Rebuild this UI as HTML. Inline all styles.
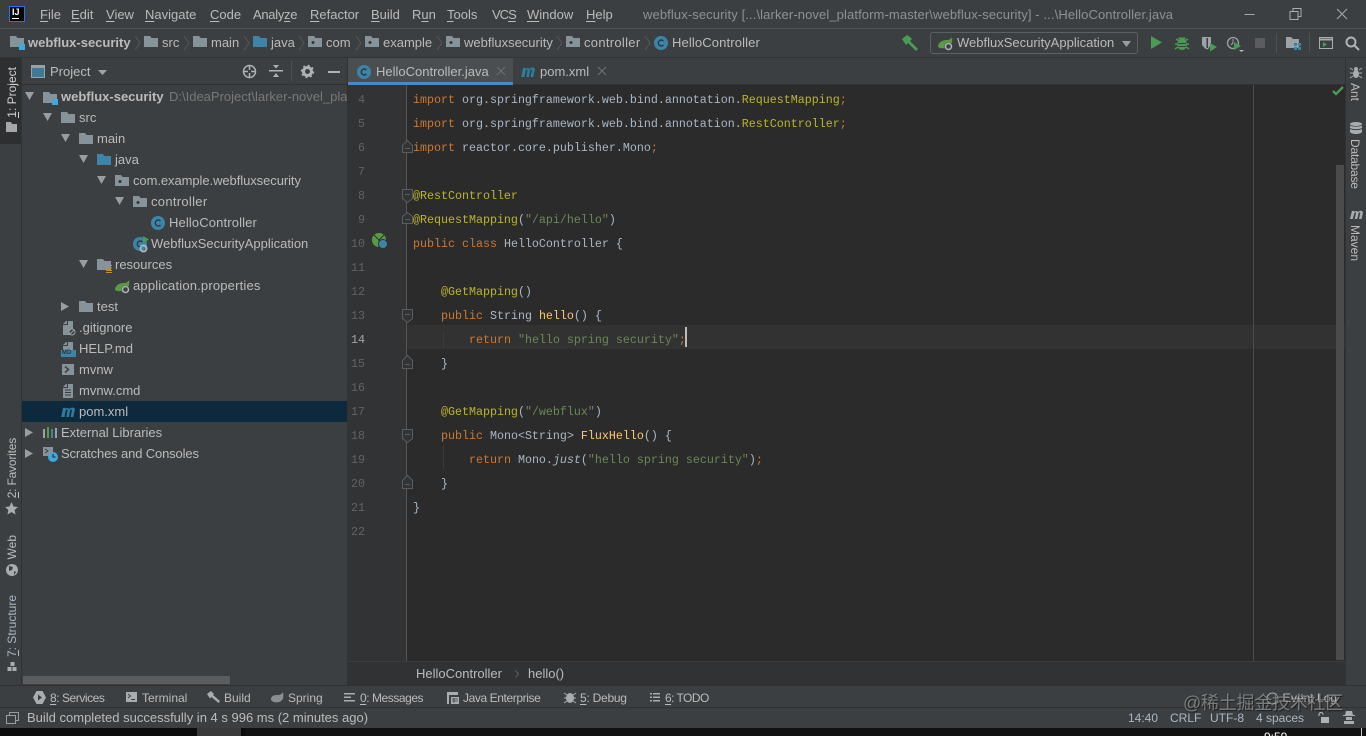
<!DOCTYPE html>
<html><head><meta charset="utf-8"><title>HelloController.java</title>
<style>
html,body{margin:0;padding:0;width:1366px;height:736px;overflow:hidden;background:#3c3f41}
*{box-sizing:border-box}
.b{position:absolute}
.t{position:absolute;white-space:pre;font:13px/18px "Liberation Sans","Noto Sans CJK SC",sans-serif;color:#bbb}
.c{position:absolute;white-space:pre;font:11.67px/18px "Liberation Mono",monospace;color:#a9b7c6;left:413px;letter-spacing:0}
.n{position:absolute;white-space:pre;font:11.67px/18px "Liberation Mono",monospace;color:#606366;text-align:right;left:348px;width:17px}
.k{color:#cc7832}.a{color:#bbb529}.s{color:#6a8759}.f{color:#ffc66d}.y{color:#cc7832}.p{color:#a9b7c6}
.i{position:absolute;overflow:visible}
.v{position:absolute;white-space:pre;font:12px/16px "Liberation Sans",sans-serif;color:#bbb;writing-mode:vertical-rl}
.vl{transform:rotate(180deg)}
u{text-decoration:underline;text-underline-offset:2px}
</style></head><body>
<svg width="0" height="0" style="position:absolute"><defs>
<symbol id="fo" viewBox="0 0 14 12"><path d="M0 1h6l1.500 2H14v9H0z" fill="#87939a"/></symbol>
<symbol id="fb" viewBox="0 0 14 12"><path d="M0 1h6l1.500 2H14v9H0z" fill="#3d84a8"/></symbol>
<symbol id="fp" viewBox="0 0 14 12"><path d="M0 1h6l1.500 2H14v9H0z" fill="#87939a"/><circle cx="5" cy="7.500" r="1.500" fill="#33363a"/></symbol>
<symbol id="dn" viewBox="0 0 9 8"><path d="M0 0h9L4.500 8z" fill="#9a9da0"/></symbol>
<symbol id="rt" viewBox="0 0 8 9"><path d="M0 0l8 4.500L0 9z" fill="#9a9da0"/></symbol>
<symbol id="cl" viewBox="0 0 14 14"><circle cx="7" cy="7" r="7" fill="#3d84a8"/><path d="M9.500 5A3 3 0 1 0 9.500 9" fill="none" stroke="#2b3a42" stroke-width="1.400"/></symbol>
<symbol id="mv" viewBox="0 0 16 11"><path d="M0 11L2 1h3l-.3 1.200C6 .8 8 .5 9 2.200 10.500.6 14-.5 15 2.500L13.300 11h-3l1.500-7.500c.1-1-1.300-1-2 .2L8.500 11h-3L7 3.500c.1-1-1.300-1-2 .2L3.500 11z" fill="#2f7d9e"/></symbol>
<symbol id="lf" viewBox="0 0 16 14"><path d="M0 10C0 5 5 3 9 3c2 0 4-1 5-3 1 5-1 10-6 11-3 .5-6 .5-8-1z" fill="#5a9a42"/><circle cx="10.500" cy="9.500" r="4" fill="#3c3f41"/><circle cx="10.500" cy="9.500" r="3" fill="none" stroke="#aeb5ba" stroke-width="1.500"/></symbol>
</defs></svg>

<!-- title bar -->
<div class="b" style="left:0;top:28px;width:1366px;height:1px;background:#505254"></div>
<div class="b" style="left:9px;top:6px;width:16px;height:16px;background:#000;border:1px solid #1e78e6"></div>
<div class="t" style="left:12px;top:7px;font:bold 9px/10px 'Liberation Sans',sans-serif;color:#fff">IJ</div>
<div class="b" style="left:12px;top:18px;width:7px;height:1px;background:#fff"></div>
<div class="t" style="left:40px;top:6px"><u>F</u>ile</div>
<div class="t" style="left:71px;top:6px"><u>E</u>dit</div>
<div class="t" style="left:106px;top:6px"><u>V</u>iew</div>
<div class="t" style="left:145px;top:6px"><u>N</u>avigate</div>
<div class="t" style="left:210px;top:6px"><u>C</u>ode</div>
<div class="t" style="left:253px;top:6px;letter-spacing:-.3px">Analy<u>z</u>e</div>
<div class="t" style="left:310px;top:6px"><u>R</u>efactor</div>
<div class="t" style="left:371px;top:6px"><u>B</u>uild</div>
<div class="t" style="left:412px;top:6px">R<u>u</u>n</div>
<div class="t" style="left:447px;top:6px"><u>T</u>ools</div>
<div class="t" style="left:492px;top:6px;letter-spacing:-1px">VC<u>S</u></div>
<div class="t" style="left:527px;top:6px"><u>W</u>indow</div>
<div class="t" style="left:586px;top:6px"><u>H</u>elp</div>
<div class="t" style="left:643px;top:6px;color:#8e9193;letter-spacing:.105px">webflux-security [...\larker-novel_platform-master\webflux-security] - ...\HelloController.java</div>
<svg class="i" style="left:1240px;top:6px" width="126" height="18" fill="none" stroke="#a9abad"><path d="M4.500 8.500h10M50 5.500h8v8h-8zM53 5.500v-3h8v8h-3M97 3l10 10M107 3L97 13"/></svg>

<!-- nav bar -->
<div class="b" style="left:0;top:57px;width:1366px;height:1px;background:#313335"></div>
<svg class="i" style="left:10px;top:35px" width="14" height="12"><use href="#fo"/></svg>
<div class="b" style="left:19px;top:44px;width:6px;height:6px;background:#3fa8dc"></div>
<div class="t" style="left:28px;top:34px;font-weight:bold">webflux-security</div>
<svg class="i" style="left:134px;top:35px" width="8" height="16" fill="none" stroke="#55585a"><path d="M1 1l5 7-5 7"/></svg>
<svg class="i" style="left:144px;top:35px" width="14" height="12"><use href="#fo"/></svg>
<div class="t" style="left:162px;top:34px">src</div>
<svg class="i" style="left:183px;top:35px" width="8" height="16" fill="none" stroke="#55585a"><path d="M1 1l5 7-5 7"/></svg>
<svg class="i" style="left:193px;top:35px" width="14" height="12"><use href="#fo"/></svg>
<div class="t" style="left:211px;top:34px">main</div>
<svg class="i" style="left:243px;top:35px" width="8" height="16" fill="none" stroke="#55585a"><path d="M1 1l5 7-5 7"/></svg>
<svg class="i" style="left:253px;top:35px" width="14" height="12"><use href="#fb"/></svg>
<div class="t" style="left:271px;top:34px">java</div>
<svg class="i" style="left:298px;top:35px" width="8" height="16" fill="none" stroke="#55585a"><path d="M1 1l5 7-5 7"/></svg>
<svg class="i" style="left:308px;top:35px" width="14" height="12"><use href="#fp"/></svg>
<div class="t" style="left:326px;top:34px">com</div>
<svg class="i" style="left:355px;top:35px" width="8" height="16" fill="none" stroke="#55585a"><path d="M1 1l5 7-5 7"/></svg>
<svg class="i" style="left:365px;top:35px" width="14" height="12"><use href="#fp"/></svg>
<div class="t" style="left:383px;top:34px">example</div>
<svg class="i" style="left:436px;top:35px" width="8" height="16" fill="none" stroke="#55585a"><path d="M1 1l5 7-5 7"/></svg>
<svg class="i" style="left:446px;top:35px" width="14" height="12"><use href="#fp"/></svg>
<div class="t" style="left:464px;top:34px">webfluxsecurity</div>
<svg class="i" style="left:556px;top:35px" width="8" height="16" fill="none" stroke="#55585a"><path d="M1 1l5 7-5 7"/></svg>
<svg class="i" style="left:566px;top:35px" width="14" height="12"><use href="#fp"/></svg>
<div class="t" style="left:584px;top:34px;letter-spacing:.3px">controller</div>
<svg class="i" style="left:644px;top:35px" width="8" height="16" fill="none" stroke="#55585a"><path d="M1 1l5 7-5 7"/></svg>
<svg class="i" style="left:654px;top:36px" width="14" height="14"><use href="#cl"/></svg>
<div class="t" style="left:672px;top:34px;letter-spacing:.13px">HelloController</div>

<!-- toolbar right -->
<svg class="i" style="left:902px;top:35px" width="17" height="16"><path d="M0 4l5-4 3 2 2 2-2 2 8 8-2 2-8-8-2 2z" fill="#499c54"/></svg>
<div class="b" style="left:930px;top:32px;width:208px;height:22px;border:1px solid #5e6060;border-radius:3px"></div>
<svg class="i" style="left:938px;top:37px" width="16" height="14"><use href="#lf"/></svg>
<div class="t" style="left:957px;top:34px">WebfluxSecurityApplication</div>
<svg class="i" style="left:1122px;top:41px" width="9" height="6"><path d="M0 0h9L4.500 6z" fill="#9a9da0"/></svg>
<svg class="i" style="left:1151px;top:36px" width="11" height="13"><path d="M0 0l11 6.500L0 13z" fill="#499c54"/></svg>
<svg class="i" style="left:1175px;top:36px" width="14" height="14"><path d="M3.500 1.500h7v2h-7z" fill="#499c54"/><ellipse cx="7" cy="8.500" rx="4.800" ry="5.500" fill="#499c54"/><path d="M1 3l3 2M13 3l-3 2M0 8h3M11 8h3M0 13l3-2M14 13l-3-2" stroke="#499c54" stroke-width="1.500"/><path d="M3 7.500h8M3 10.500h8" stroke="#3c3f41"/></svg>
<svg class="i" style="left:1202px;top:37px" width="15" height="15"><path d="M0 0h9v7l-3 5.500-3-1L0 8z" fill="#9ba2a8"/><path d="M4.500 1H6v10H4.500z" fill="#3c3f41"/><path d="M8 6l7 4-7 4.500z" fill="#499c54"/></svg>
<svg class="i" style="left:1226px;top:36px" width="18" height="16"><circle cx="7" cy="7" r="5.500" fill="none" stroke="#9ba2a8" stroke-width="1.300"/><path d="M7 3v4l-2 2" fill="none" stroke="#9ba2a8"/><path d="M8 6l7 4-7 4z" fill="#499c54"/><path d="M13 14h5l-2.500 2z" fill="#bbb"/></svg>
<div class="b" style="left:1255px;top:38px;width:10px;height:10px;background:#5a5c5e"></div>
<div class="b" style="left:1276px;top:33px;width:1px;height:20px;background:#4d4f51"></div>
<svg class="i" style="left:1286px;top:37px" width="15" height="13"><path d="M0 0h5l2 2h6v9H0z" fill="#9ba2a8"/><path d="M8 6h3v3H8zM12 6h3v3h-3zM8 10h3v3H8zM12 10h3v3h-3z" fill="#3d84a8"/></svg>
<div class="b" style="left:1309px;top:33px;width:1px;height:20px;background:#4d4f51"></div>
<svg class="i" style="left:1319px;top:37px" width="14" height="12" fill="none"><path d="M.5.500h13v11H.500z" stroke="#a9abad"/><path d="M.5 2.500h13" stroke="#a9abad" stroke-width="2"/><path d="M4 5l4 2.500L4 10z" fill="#499c54"/></svg>
<svg class="i" style="left:1345px;top:36px" width="15" height="15" fill="none" stroke="#b0b3b6" stroke-width="2"><circle cx="6" cy="6" r="4.500"/><path d="M9.500 9.500L14 14"/></svg>

<!-- left stripe -->
<div class="b" style="left:0;top:58px;width:21px;height:86px;background:#2d2f30"></div>
<div class="b" style="left:21px;top:58px;width:1px;height:628px;background:#323232"></div>
<div class="v vl" style="left:4px;top:67px;color:#d0d0d0">1: Project</div>
<div class="b" style="left:18px;top:112px;width:1px;height:6px;background:#d0d0d0"></div>
<svg class="i" style="left:6px;top:122px" width="11" height="10"><path d="M0 0h5l1 2h5v8H0z" fill="#a4a8ab"/></svg>
<div class="v vl" style="left:4px;top:438px;letter-spacing:-.2px">2: Favorites</div>
<div class="b" style="left:18px;top:492px;width:1px;height:6px;background:#bbb"></div>
<svg class="i" style="left:5px;top:502px" width="13" height="13"><path d="M6.500 0l2 4.500 4.500.5-3.400 3 1 4.500-4.100-2.400-4.100 2.400 1-4.500L0 5l4.500-.5z" fill="#a9adb0"/></svg>
<div class="v vl" style="left:4px;top:535px">Web</div>
<svg class="i" style="left:6px;top:564px" width="12" height="12"><circle cx="6" cy="6" r="6" fill="#a9adb0"/><path d="M3 2l4 1-1 3-3 1zM8 7l2 1-2 3z" fill="#3c3f41"/></svg>
<div class="v vl" style="left:4px;top:595px;color:#a9b7c6">7: Structure</div>
<div class="b" style="left:18px;top:650px;width:1px;height:6px;background:#a9b7c6"></div>
<svg class="i" style="left:7px;top:662px" width="10" height="10"><path d="M3 0h4v4H3zM0 5h4v4H0zM5 5h4v4H5z" fill="#a9adb0" transform="translate(.5)"/></svg>

<!-- project panel -->
<div class="b" style="left:22px;top:84px;width:326px;height:1px;background:#323232"></div>
<div class="b" style="left:347px;top:58px;width:1px;height:628px;background:#323232"></div>
<svg class="i" style="left:31px;top:65px" width="14" height="13"><rect x=".5" y=".5" width="13" height="12" fill="#3c7a98" stroke="#9aa0a4"/><rect x="1" y="1" width="12" height="2" fill="#9aa0a4"/></svg>
<div class="t" style="left:50px;top:63px">Project</div>
<svg class="i" style="left:98px;top:70px" width="9" height="5"><path d="M0 0h9L4.500 5z" fill="#a0a3a6"/></svg>
<svg class="i" style="left:242px;top:64px" width="15" height="15" fill="none" stroke="#afb1b3" stroke-width="1.500"><circle cx="7.500" cy="7.500" r="6"/><path d="M7.500 1v5M7.500 9v5M1 7.500h5M9 7.500h5"/></svg>
<svg class="i" style="left:269px;top:64px" width="14" height="14" fill="#afb1b3"><path d="M0 6h14v1.500H0zM4 1h6L7 4.500zM4 13h6L7 9z"/></svg>
<div class="b" style="left:291px;top:61px;width:1px;height:20px;background:#4d4f51"></div>
<svg class="i" style="left:301px;top:65px" width="13" height="13"><circle cx="6.500" cy="6.500" r="4" fill="none" stroke="#afb1b3" stroke-width="3"/><circle cx="6.500" cy="6.500" r="6" fill="none" stroke="#afb1b3" stroke-width="1.500" stroke-dasharray="2 2.700"/></svg>
<div class="b" style="left:328px;top:71px;width:12px;height:2px;background:#afb1b3"></div>

<div class="b" style="left:22px;top:401px;width:325px;height:21px;background:#0d293e"></div>

<svg class="i" style="left:25px;top:92px" width="9" height="8"><use href="#dn"/></svg>
<svg class="i" style="left:43px;top:91px" width="14" height="12"><use href="#fo"/></svg>
<div class="b" style="left:52px;top:99px;width:6px;height:6px;background:#3fa8dc"></div>
<div class="t" style="left:61px;top:88px;font-weight:bold">webflux-security</div>
<div class="t" style="left:169px;top:88px;width:178px;overflow:hidden;font-size:13px;color:#787878">D:\IdeaProject\larker-novel_platform-master</div>

<svg class="i" style="left:43px;top:113px" width="9" height="8"><use href="#dn"/></svg>
<svg class="i" style="left:61px;top:111px" width="14" height="12"><use href="#fo"/></svg>
<div class="t" style="left:79px;top:109px">src</div>

<svg class="i" style="left:61px;top:134px" width="9" height="8"><use href="#dn"/></svg>
<svg class="i" style="left:79px;top:132px" width="14" height="12"><use href="#fo"/></svg>
<div class="t" style="left:97px;top:130px">main</div>

<svg class="i" style="left:79px;top:155px" width="9" height="8"><use href="#dn"/></svg>
<svg class="i" style="left:97px;top:153px" width="14" height="12"><use href="#fb"/></svg>
<div class="t" style="left:115px;top:151px">java</div>

<svg class="i" style="left:97px;top:176px" width="9" height="8"><use href="#dn"/></svg>
<svg class="i" style="left:115px;top:174px" width="14" height="12"><use href="#fp"/></svg>
<div class="t" style="left:133px;top:172px;letter-spacing:-.07px">com.example.webfluxsecurity</div>

<svg class="i" style="left:115px;top:197px" width="9" height="8"><use href="#dn"/></svg>
<svg class="i" style="left:133px;top:195px" width="14" height="12"><use href="#fp"/></svg>
<div class="t" style="left:151px;top:193px;letter-spacing:.3px">controller</div>

<svg class="i" style="left:151px;top:216px" width="14" height="14"><use href="#cl"/></svg>
<div class="t" style="left:169px;top:214px;letter-spacing:.13px">HelloController</div>

<svg class="i" style="left:133px;top:237px" width="14" height="14"><use href="#cl"/></svg>
<svg class="i" style="left:143px;top:236px" width="6" height="7"><path d="M0 0l6 3.500L0 7z" fill="#499c54"/></svg>
<svg class="i" style="left:139px;top:244px" width="9" height="9"><circle cx="4.500" cy="4.500" r="3" fill="none" stroke="#aeb5ba" stroke-width="2"/></svg>
<div class="t" style="left:151px;top:235px">WebfluxSecurityApplication</div>

<svg class="i" style="left:79px;top:260px" width="9" height="8"><use href="#dn"/></svg>
<svg class="i" style="left:97px;top:258px" width="14" height="12"><use href="#fo"/></svg>
<svg class="i" style="left:106px;top:265px" width="6" height="8" fill="#c98f2c"><path d="M0 0h6v1H0zM0 2.500h6v1H0zM0 5h6v1H0zM0 7h6v1H0z"/></svg>
<div class="t" style="left:115px;top:256px">resources</div>

<svg class="i" style="left:115px;top:280px" width="16" height="14"><use href="#lf"/></svg>
<div class="t" style="left:133px;top:277px;letter-spacing:.18px">application.properties</div>

<svg class="i" style="left:61px;top:302px" width="8" height="9"><use href="#rt"/></svg>
<svg class="i" style="left:79px;top:300px" width="14" height="12"><use href="#fo"/></svg>
<div class="t" style="left:97px;top:298px">test</div>

<svg class="i" style="left:63px;top:321px" width="10" height="14"><path d="M3 0h1v3H0zM5 0h5v14H0V4h5z" fill="#87939a"/></svg>
<svg class="i" style="left:68px;top:328px" width="8" height="8" fill="none" stroke="#9aa0a4"><circle cx="4" cy="4" r="3" fill="#3c3f41"/><path d="M2 6l4-4"/></svg>
<div class="t" style="left:79px;top:319px">.gitignore</div>

<svg class="i" style="left:63px;top:342px" width="10" height="9"><path d="M3 0h1v3H0zM5 0h5v9H0V4h5z" fill="#87939a"/></svg>
<div class="b" style="left:61px;top:350px;width:15px;height:7px;background:#3d84a8"></div>
<div class="t" style="left:62px;top:350px;font:bold 6px/7px 'Liberation Sans',sans-serif;color:#2b3a42">MD</div>
<div class="t" style="left:79px;top:340px">HELP.md</div>

<svg class="i" style="left:62px;top:364px" width="12" height="11"><path d="M0 0h12v11H0z" fill="#87939a"/><path d="M3 2.500l3.500 3L3 8.500" fill="none" stroke="#3c3f41" stroke-width="1.500"/></svg>
<div class="t" style="left:79px;top:361px">mvnw</div>

<svg class="i" style="left:63px;top:384px" width="10" height="14"><path d="M3 0h1v3H0zM5 0h5v14H0V4h5z" fill="#87939a"/><path d="M2 6h6M2 8.500h6M2 11h6" stroke="#3c3f41"/></svg>
<div class="t" style="left:79px;top:382px">mvnw.cmd</div>

<svg class="i" style="left:61px;top:407px" width="15" height="10"><use href="#mv"/></svg>
<div class="t" style="left:79px;top:403px">pom.xml</div>

<svg class="i" style="left:25px;top:428px" width="8" height="9"><use href="#rt"/></svg>
<svg class="i" style="left:43px;top:427px" width="14" height="11"><path d="M0 2h2v9H0z" fill="#9aa0a4"/><path d="M4 0h2v11H4z" fill="#5a9a42"/><path d="M8 2h2v9H8z" fill="#3d84a8"/><path d="M12 1h2v10h-2z" fill="#9aa0a4"/></svg>
<div class="t" style="left:61px;top:424px">External Libraries</div>

<svg class="i" style="left:25px;top:449px" width="8" height="9"><use href="#rt"/></svg>
<svg class="i" style="left:43px;top:447px" width="15" height="15"><path d="M0 0h10v9H0z" fill="#87939a"/><path d="M2 2l3 2-3 2" fill="none" stroke="#3c3f41"/><circle cx="10" cy="10" r="5" fill="#3fa8dc"/><path d="M10 7v3h2.500" fill="none" stroke="#2b3a42" stroke-width="1.200"/></svg>
<div class="t" style="left:61px;top:445px;letter-spacing:-.14px">Scratches and Consoles</div>

<div class="b" style="left:23px;top:676px;width:207px;height:8px;background:#5a5c5e"></div>

<!-- tabs -->
<div class="b" style="left:348px;top:58px;width:165px;height:24px;background:#4b4e50"></div>
<div class="b" style="left:348px;top:82px;width:165px;height:3px;background:#4a88c7"></div>
<div class="b" style="left:513px;top:84px;width:832px;height:1px;background:#323232"></div>
<svg class="i" style="left:357px;top:65px" width="14" height="14"><use href="#cl"/></svg>
<div class="t" style="left:376px;top:63px">HelloController.java</div>
<svg class="i" style="left:497px;top:67px" width="8" height="8" fill="none" stroke="#6e7072"><path d="M0 0l8 8M8 0L0 8"/></svg>
<svg class="i" style="left:521px;top:67px" width="15" height="10"><use href="#mv"/></svg>
<div class="t" style="left:540px;top:63px">pom.xml</div>
<svg class="i" style="left:598px;top:67px" width="8" height="8" fill="none" stroke="#6e7072"><path d="M0 0l8 8M8 0L0 8"/></svg>

<!-- editor -->
<div class="b" style="left:348px;top:85px;width:997px;height:576px;background:#2b2b2b"></div>
<div class="b" style="left:348px;top:85px;width:59px;height:576px;background:#313335"></div>
<div class="b" style="left:406px;top:85px;width:1px;height:576px;background:#555"></div>
<div class="b" style="left:407px;top:325px;width:938px;height:24px;background:#323232"></div>
<div class="b" style="left:1253px;top:85px;width:1px;height:576px;background:#4d4d4d"></div>
<div class="b" style="left:1336px;top:165px;width:8px;height:495px;background:#4b4b4b"></div>
<svg class="i" style="left:1332px;top:86px" width="12" height="10"><path d="M1 5l3 3 7-7" fill="none" stroke="#499c54" stroke-width="2.300"/></svg>
<div class="b" style="left:443px;top:331px;width:1px;height:18px;background:#3b3b3b"></div>
<div class="b" style="left:443px;top:445px;width:1px;height:24px;background:#3b3b3b"></div>
<div class="b" style="left:685px;top:327px;width:2px;height:20px;background:#bbb"></div>

<div class="n" style="top:91px">4</div><div class="n" style="top:115px">5</div><div class="n" style="top:139px">6</div><div class="n" style="top:163px">7</div><div class="n" style="top:187px">8</div><div class="n" style="top:211px">9</div><div class="n" style="top:235px">10</div><div class="n" style="top:259px">11</div><div class="n" style="top:283px">12</div><div class="n" style="top:307px">13</div><div class="n" style="top:331px;color:#a4a3a3">14</div><div class="n" style="top:355px">15</div><div class="n" style="top:379px">16</div><div class="n" style="top:403px">17</div><div class="n" style="top:427px">18</div><div class="n" style="top:451px">19</div><div class="n" style="top:475px">20</div><div class="n" style="top:499px">21</div><div class="n" style="top:523px">22</div>

<svg class="i" style="left:402px;top:85px" width="12" height="440" fill="#313335" stroke="#5a5c5e">
<path d="M.5 60.500l5-5 5 5v7h-10zM3 63.500h5"/>
<path d="M.5 104.500h10v9l-5 4-5-4zM3 109.500h5"/>
<path d="M.5 131.500l5-4 5 4v7h-10zM3 134.500h5"/>
<path d="M.5 224.500h10v9l-5 4-5-4zM3 229.500h5"/>
<path d="M.5 275.500l5-5 5 5v8h-10zM3 279.500h5"/>
<path d="M.5 344.500h10v9l-5 4-5-4zM3 349.500h5"/>
<path d="M.5 395.500l5-5 5 5v8h-10zM3 399.500h5"/>
</svg>
<svg class="i" style="left:372px;top:233px" width="16" height="16"><circle cx="7" cy="7" r="7" fill="#5a9a42"/><path d="M2 2l5 5 5-5M7 7v7" stroke="#313335" fill="none"/><circle cx="11" cy="11" r="4.500" fill="#3d84a8" stroke="#313335"/></svg>

<div class="c" style="top:91px"><span class="k">import</span> org.springframework.web.bind.annotation.<span class="a">RequestMapping</span><span class="y">;</span></div>
<div class="c" style="top:115px"><span class="k">import</span> org.springframework.web.bind.annotation.<span class="a">RestController</span><span class="y">;</span></div>
<div class="c" style="top:139px"><span class="k">import</span> reactor.core.publisher.Mono<span class="y">;</span></div>
<div class="c a" style="top:187px">@RestController</div>
<div class="c" style="top:211px"><span class="a">@RequestMapping</span>(<span class="s">"/api/hello"</span>)</div>
<div class="c" style="top:235px"><span class="k">public class</span> HelloController {</div>
<div class="c" style="top:283px">    <span class="a">@GetMapping</span>()</div>
<div class="c" style="top:307px">    <span class="k">public</span> String <span class="f">hello</span>() {</div>
<div class="c" style="top:331px">        <span class="k">return</span> <span class="s">"hello spring security"</span><span class="y">;</span></div>
<div class="c" style="top:355px">    }</div>
<div class="c" style="top:403px">    <span class="a">@GetMapping</span>(<span class="s">"/webflux"</span>)</div>
<div class="c" style="top:427px">    <span class="k">public</span> Mono&lt;String&gt; <span class="f">FluxHello</span>() {</div>
<div class="c" style="top:451px">        <span class="k">return</span> Mono.<i>just</i>(<span class="s">"hello spring security"</span>)<span class="y">;</span></div>
<div class="c" style="top:475px">    }</div>
<div class="c" style="top:499px">}</div>

<!-- editor breadcrumbs -->
<div class="b" style="left:348px;top:661px;width:997px;height:25px;background:#303234;border-top:1px solid #3a3c3e"></div>
<div class="t" style="left:416px;top:665px">HelloController</div>
<svg class="i" style="left:515px;top:670px" width="5" height="8" fill="none" stroke="#606366"><path d="M.5.500l3 3.500-3 3.500"/></svg>
<div class="t" style="left:528px;top:665px">hello()</div>

<!-- right stripe -->
<div class="b" style="left:1345px;top:58px;width:1px;height:628px;background:#323232"></div>
<svg class="i" style="left:1350px;top:66px" width="12" height="12" fill="#a9adb0"><ellipse cx="6" cy="3" rx="2" ry="2"/><ellipse cx="6" cy="8" rx="3" ry="4"/><path d="M0 2l3 2M12 2L9 4M0 7h3M12 7H9M0 12l3-2M12 12l-3-2" stroke="#a9adb0"/></svg>
<div class="v" style="left:1347px;top:83px">Ant</div>
<svg class="i" style="left:1350px;top:122px" width="12" height="12" fill="#a9adb0"><ellipse cx="6" cy="2" rx="6" ry="2"/><path d="M0 3.500c2 1.500 10 1.500 12 0V6c-2 1.500-10 1.500-12 0zM0 7c2 1.500 10 1.500 12 0v3c-2 2.700-10 2.700-12 0z"/></svg>
<div class="v" style="left:1347px;top:139px;letter-spacing:-.2px">Database</div>
<svg class="i" style="left:1350px;top:210px" width="13" height="9"><path d="M0 9L2 1h2.500l-.3 1C5.500.7 7 .5 8 2c1.500-1.500 4.500-2 5 .8L11.500 9h-2.500l1.300-6c.1-.8-1-.8-1.700.2L7.200 9H4.700l1.300-6c.1-.8-1-.8-1.700.2L2.700 9z" fill="#a9adb0"/></svg>
<div class="v" style="left:1347px;top:225px">Maven</div>

<!-- bottom tool bar -->
<div class="b" style="left:0;top:685px;width:1366px;height:1px;background:#2f3132"></div>
<div class="b" style="left:0;top:707px;width:1366px;height:1px;background:#323232"></div>
<svg class="i" style="left:33px;top:691px" width="13" height="13"><path d="M3.500 0h6L13 6.500 9.500 13h-6L0 6.500z" fill="#a9adb0"/><path d="M5 3.500l4 3-4 3z" fill="#3c3f41"/></svg>
<div class="t" style="left:50px;top:689px;font-size:12px;letter-spacing:-.45px"><u>8</u>: Services</div>
<svg class="i" style="left:126px;top:692px" width="11" height="10"><path d="M0 0h11v10H0z" fill="#a9adb0"/><path d="M2 2l2.500 2L2 6M5 7.500h4" fill="none" stroke="#3c3f41"/></svg>
<div class="t" style="left:142px;top:689px;font-size:12px">Terminal</div>
<svg class="i" style="left:207px;top:691px" width="13" height="12"><path d="M0 3l4-3 2 2 1 1-1 1 7 6-1.500 2-7-6-1.500 1.500z" fill="#a9adb0"/></svg>
<div class="t" style="left:224px;top:689px;font-size:12px">Build</div>
<svg class="i" style="left:271px;top:692px" width="13" height="11"><path d="M0 8C0 3 4 3 7 3c2 0 4-1 5-3 1 5 0 9-4 10-3 .7-6 .5-8-2z" fill="#8a8e91"/></svg>
<div class="t" style="left:288px;top:689px;font-size:12px">Spring</div>
<svg class="i" style="left:344px;top:693px" width="11" height="9" fill="#a9adb0"><path d="M0 0h11v1.500H0zM0 3.500h7V5H0zM0 7h11v1.500H0z"/></svg>
<div class="t" style="left:360px;top:689px;font-size:12px;letter-spacing:-.45px"><u>0</u>: Messages</div>
<svg class="i" style="left:447px;top:692px" width="12" height="12"><path d="M0 0h11v3H2v9H0z" fill="#a9adb0"/><path d="M4 5h8v7H4z" fill="#a9adb0"/><path d="M5 7h6M5 9h6M7 6v5" stroke="#3c3f41" stroke-width=".8"/></svg>
<div class="t" style="left:463px;top:689px;font-size:12px;letter-spacing:-.4px">Java Enterprise</div>
<svg class="i" style="left:564px;top:691px" width="12" height="12" fill="#a9adb0"><ellipse cx="6" cy="7" rx="4" ry="5"/><path d="M0 2l3 2M12 2L9 4M0 7h3M12 7H9M0 12l3-2M12 12l-3-2" stroke="#a9adb0"/></svg>
<div class="t" style="left:580px;top:689px;font-size:12px;letter-spacing:-.25px"><u>5</u>: Debug</div>
<svg class="i" style="left:650px;top:693px" width="10" height="9" fill="#a9adb0"><path d="M0 0h2v1.500H0zM3 0h7v1.500H3zM0 3.500h2V5H0zM3 3.500h7V5H3zM0 7h2v1.500H0zM3 7h7v1.500H3z"/></svg>
<div class="t" style="left:665px;top:689px;font-size:12px;letter-spacing:-.55px"><u>6</u>: TODO</div>
<svg class="i" style="left:1266px;top:692px" width="13" height="13" fill="none" stroke="#a9adb0"><circle cx="6.500" cy="6.500" r="5.500"/></svg>
<div class="t" style="left:1283px;top:689px;font-size:12px">Event Log</div>

<!-- status bar -->
<svg class="i" style="left:6px;top:712px" width="13" height="12" fill="none" stroke="#9a9da0"><path d="M.5 3.500h9v8h-9zM3.500 3V.5h9v8H10"/></svg>
<div class="t" style="left:27px;top:709px">Build completed successfully in 4 s 996 ms (2 minutes ago)</div>
<div class="t" style="left:1128px;top:709px;color:#a9b7c6;font-size:12px">14:40</div>
<div class="t" style="left:1170px;top:709px;color:#a9b7c6;font-size:12px">CRLF</div>
<div class="t" style="left:1210px;top:709px;color:#a9b7c6;font-size:12px">UTF-8</div>
<div class="t" style="left:1256px;top:709px;color:#a9b7c6;font-size:12px">4 spaces</div>
<svg class="i" style="left:1318px;top:712px" width="12" height="12"><path d="M1 4V2.500a2 2 0 0 1 4 0" fill="none" stroke="#afb1b3" stroke-width="1.200"/><path d="M3 5h8v6H3z" fill="#afb1b3"/></svg>
<svg class="i" style="left:1343px;top:711px" width="12" height="13" fill="#a9adb0"><path d="M3 0h6l1 4h2v1H0V4h2zM3 6h6v3H3zM1 10h10v3H1z"/></svg>

<!-- bottom strip -->
<div class="b" style="left:0;top:728px;width:1366px;height:8px;background:#0c0c0c"></div>
<div class="b" style="left:197px;top:728px;width:44px;height:8px;background:#3a3a3a"></div>
<div class="b" style="left:245px;top:728px;width:1121px;height:8px;background:#111"></div>
<div class="t" style="left:1264px;top:730px;color:#fff;font-size:12px;height:6px;overflow:hidden;line-height:14px">9:59</div>
<div class="b" style="left:1361px;top:728px;width:1px;height:8px;background:#ccc"></div>

<!-- watermark -->
<div class="t" style="left:1183px;top:691px;font:18px/24px 'Liberation Sans','Noto Sans CJK SC',sans-serif;letter-spacing:-.25px;color:rgba(170,172,175,.62);text-shadow:1px 1px 1px rgba(0,0,0,.55)">@稀土掘金技术社区</div>
</body></html>
